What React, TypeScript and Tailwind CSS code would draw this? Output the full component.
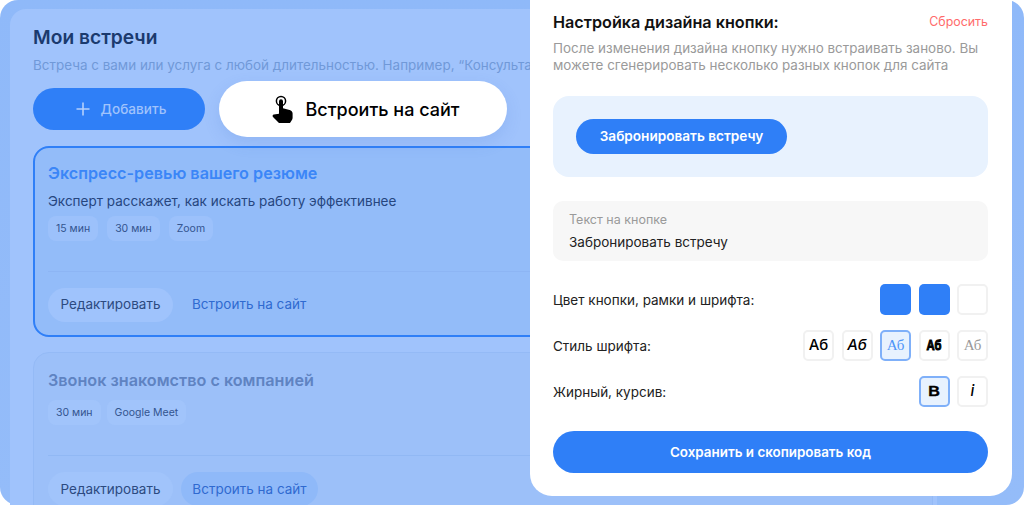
export default function App() {
  const Tag = ({ t, faded }: { t: string; faded?: boolean }) => (
    <span className={`h-[25px] px-2 flex items-center rounded-[8px] text-[10.5px] text-[#33548f] ${faded ? "bg-[#a1c4fb]" : "bg-[#9cc1fb]"}`}>{t}</span>
  );
  const Swatch = ({ c }: { c: string }) => <div className={`w-[31px] h-[31px] rounded-[5px] ${c}`} />;
  const Box = ({ children, active, cls }: { children: React.ReactNode; active?: boolean; cls?: string }) => (
    <div className={`w-[31px] h-[31px] rounded-[5px] flex items-center justify-center text-black ${active ? "border-2 border-[#7fb0f9] bg-[#e8f2fe]" : "border-2 border-[#f1f1f1] bg-white"} ${cls ?? ""}`}>{children}</div>
  );
  return (
    <div className="relative w-[1024px] h-[505px] overflow-hidden bg-white font-['Inter',sans-serif]">
      <div className="h-full rounded-[18px] bg-gradient-to-b from-[#8fb9f9] to-[#94bcf9] pl-[10px] pt-[9px] pr-[87px]">
        <div className="h-[520px] rounded-[16px] bg-[#a0c3fc] pl-[23px] overflow-hidden">
          <h1 className="mt-[14px] text-[19.2px] leading-[28px] font-semibold text-[#1b3a6e]">Мои встречи</h1>
          <p className="mt-[5px] text-[13.45px] leading-[18px] text-[#7099d8] whitespace-nowrap">Встреча с вами или услуга с любой длительностью. Например, “Консульта</p>
          <div className="mt-[7px] flex items-center gap-[14px] h-[56px]">
            <div className="w-[172px] h-[42px] rounded-full bg-[#2f7ff7] flex items-center justify-center gap-[11px] pl-[4px] text-[13.6px] font-medium text-[#a0c3fc]">
              <svg width="14" height="14" viewBox="0 0 14 14" fill="none" stroke="#b5d0fb" strokeWidth="1.6"><path d="M7 0.5v13M0.5 7h13" /></svg>
              Добавить
            </div>
            <div className="w-[288px] h-[56px] pl-[5px] rounded-full bg-white flex items-center justify-center gap-[12px] text-[18px] font-medium text-black shadow-[0_6px_16px_rgba(60,110,200,0.15)]">
              <svg width="22" height="29" viewBox="0 0 22 29" fill="none">
                <circle cx="9" cy="6" r="4.6" stroke="#000" strokeWidth="1.5" />
                <path d="M7 6.2a2 2 0 0 1 4 0v7l6.6 1.7c1.7.4 3 1.8 3 3.6v4.5c0 1-.4 1.8-1 2.5l-1.6 2.5H7l-6-6c-.8-.9-.4-2.4.9-2.6l5.1-.7z" fill="#000" />
              </svg>
              Встроить на сайт
            </div>
          </div>
          <div className="mt-[9px] w-[900px] h-[191px] rounded-[16px] border-2 border-[#2f7ff7] bg-[#93bcf9] pl-[13px] pt-[13px] flex flex-col">
            <h2 className="text-[16.2px] leading-[24px] font-semibold text-[#3b86f7]">Экспресс-ревью вашего резюме</h2>
            <p className="mt-[7px] text-[13.5px] leading-[18px] text-[#26467f]">Эксперт расскажет, как искать работу эффективнее</p>
            <div className="mt-[6px] flex gap-[9px]"><Tag t="15 мин" /><Tag t="30 мин" /><Tag t="Zoom" /></div>
            <div className="mt-auto h-[64px] border-t border-[#8db5f4] flex items-center gap-[19px] text-[13.5px]">
              <span className="h-[34px] w-[125px] mt-[2px] rounded-full bg-[#9fc3fc] text-[#2c4a80] flex items-center justify-center">Редактировать</span>
              <span className="text-[#2f6ad0] mt-[2px]">Встроить на сайт</span>
            </div>
          </div>
          <div className="mt-[15px] w-[900px] h-[200px] rounded-[16px] border border-[#94baf6] bg-[#9cc0f9] pl-[14px] pt-[15px] flex flex-col">
            <h2 className="text-[16.2px] leading-[24px] font-semibold text-[#5f83c2]">Звонок знакомство с компанией</h2>
            <div className="mt-[8px] flex gap-[6px]"><Tag t="30 мин" faded /><Tag t="Google Meet" faded /></div>
            <div className="mt-[30px] h-[66px] border-t border-[#91b8f4] flex items-center gap-[8px] text-[13.5px]">
              <span className="h-[34px] w-[125px] mt-[1px] rounded-full bg-[#a1c4fb] text-[#2c4a80] flex items-center justify-center">Редактировать</span>
              <span className="h-[34px] w-[137px] mt-[1px] rounded-full bg-[#8fb9f9] text-[#2f6ad0] flex items-center justify-center">Встроить на сайт</span>
            </div>
          </div>
        </div>
      </div>

      <div className="absolute left-[530px] top-[-20px] w-[482px] h-[516px] rounded-b-[22px] bg-white pl-[23px] pr-[24px] pt-[32px] flex flex-col">
        <div className="flex items-center justify-between">
          <h2 className="text-[16.2px] leading-[20px] font-semibold text-[#111]">Настройка дизайна кнопки:</h2>
          <span className="text-[12.4px] text-[#ff6b6b]">Сбросить</span>
        </div>
        <p className="mt-[8px] text-[13.45px] leading-[17px] text-[#9a9a9a]">После изменения дизайна кнопку нужно встраивать заново. Вы можете сгенерировать несколько разных кнопок для сайта</p>
        <div className="mt-[22px] h-[81px] rounded-[16px] bg-[#e8f2fe] pl-[23px] flex items-center">
          <div className="w-[211px] h-[35px] rounded-full bg-[#2f7ff7] text-white text-[13.6px] font-semibold flex items-center justify-center">Забронировать встречу</div>
        </div>
        <div className="mt-[24px] h-[60px] rounded-[10px] bg-[#f7f7f7] pl-[16px] pt-[11px]">
          <div className="text-[12.5px] leading-[16px] text-[#9a9a9a]">Текст на кнопке</div>
          <div className="mt-[5px] text-[13.5px] leading-[18px] text-[#222]">Забронировать встречу</div>
        </div>
        <div className="mt-[23px] flex items-center justify-between h-[31px] text-[13.5px] text-[#222]">
          <span className="pt-[2px]">Цвет кнопки, рамки и шрифта:</span>
          <div className="flex gap-[7.5px]"><Swatch c="bg-[#2f7ff7]" /><Swatch c="bg-[#2f7ff7]" /><Swatch c="bg-white border-2 border-[#f1f1f1]" /></div>
        </div>
        <div className="mt-[15px] flex items-center justify-between h-[31px] text-[13.5px] text-[#222]">
          <span className="pt-[2px]">Стиль шрифта:</span>
          <div className="flex gap-[7.5px]">
            <Box><span className="text-[15px] font-medium">Аб</span></Box>
            <Box><span className="text-[15px] italic font-medium">Аб</span></Box>
            <Box active><span className="text-[15px] font-['Liberation_Serif',serif] text-[#4d94f8]">Аб</span></Box>
            <Box><span className="inline-block scale-x-[0.75] text-[15px] font-black font-['Liberation_Sans',sans-serif] [-webkit-text-stroke:1px_#000]">Аб</span></Box>
            <Box><span className="text-[15px] font-['Liberation_Serif',serif] text-[#999]">Аб</span></Box>
          </div>
        </div>
        <div className="mt-[15px] flex items-center justify-between h-[31px] text-[13.5px] text-[#222]">
          <span className="pt-[2px]">Жирный, курсив:</span>
          <div className="flex gap-[7.5px]">
            <Box active><span className="inline-block scale-x-[1.15] text-[14px] font-bold font-['Liberation_Sans',sans-serif] [-webkit-text-stroke:0.4px_#000]">B</span></Box>
            <Box><span className="text-[15px] italic font-medium">i</span></Box>
          </div>
        </div>
        <div className="mt-[24px] h-[42px] rounded-full bg-[#2f7ff7] text-white text-[13.4px] font-semibold flex items-center justify-center">Сохранить и скопировать код</div>
      </div>
    </div>
  );
}
